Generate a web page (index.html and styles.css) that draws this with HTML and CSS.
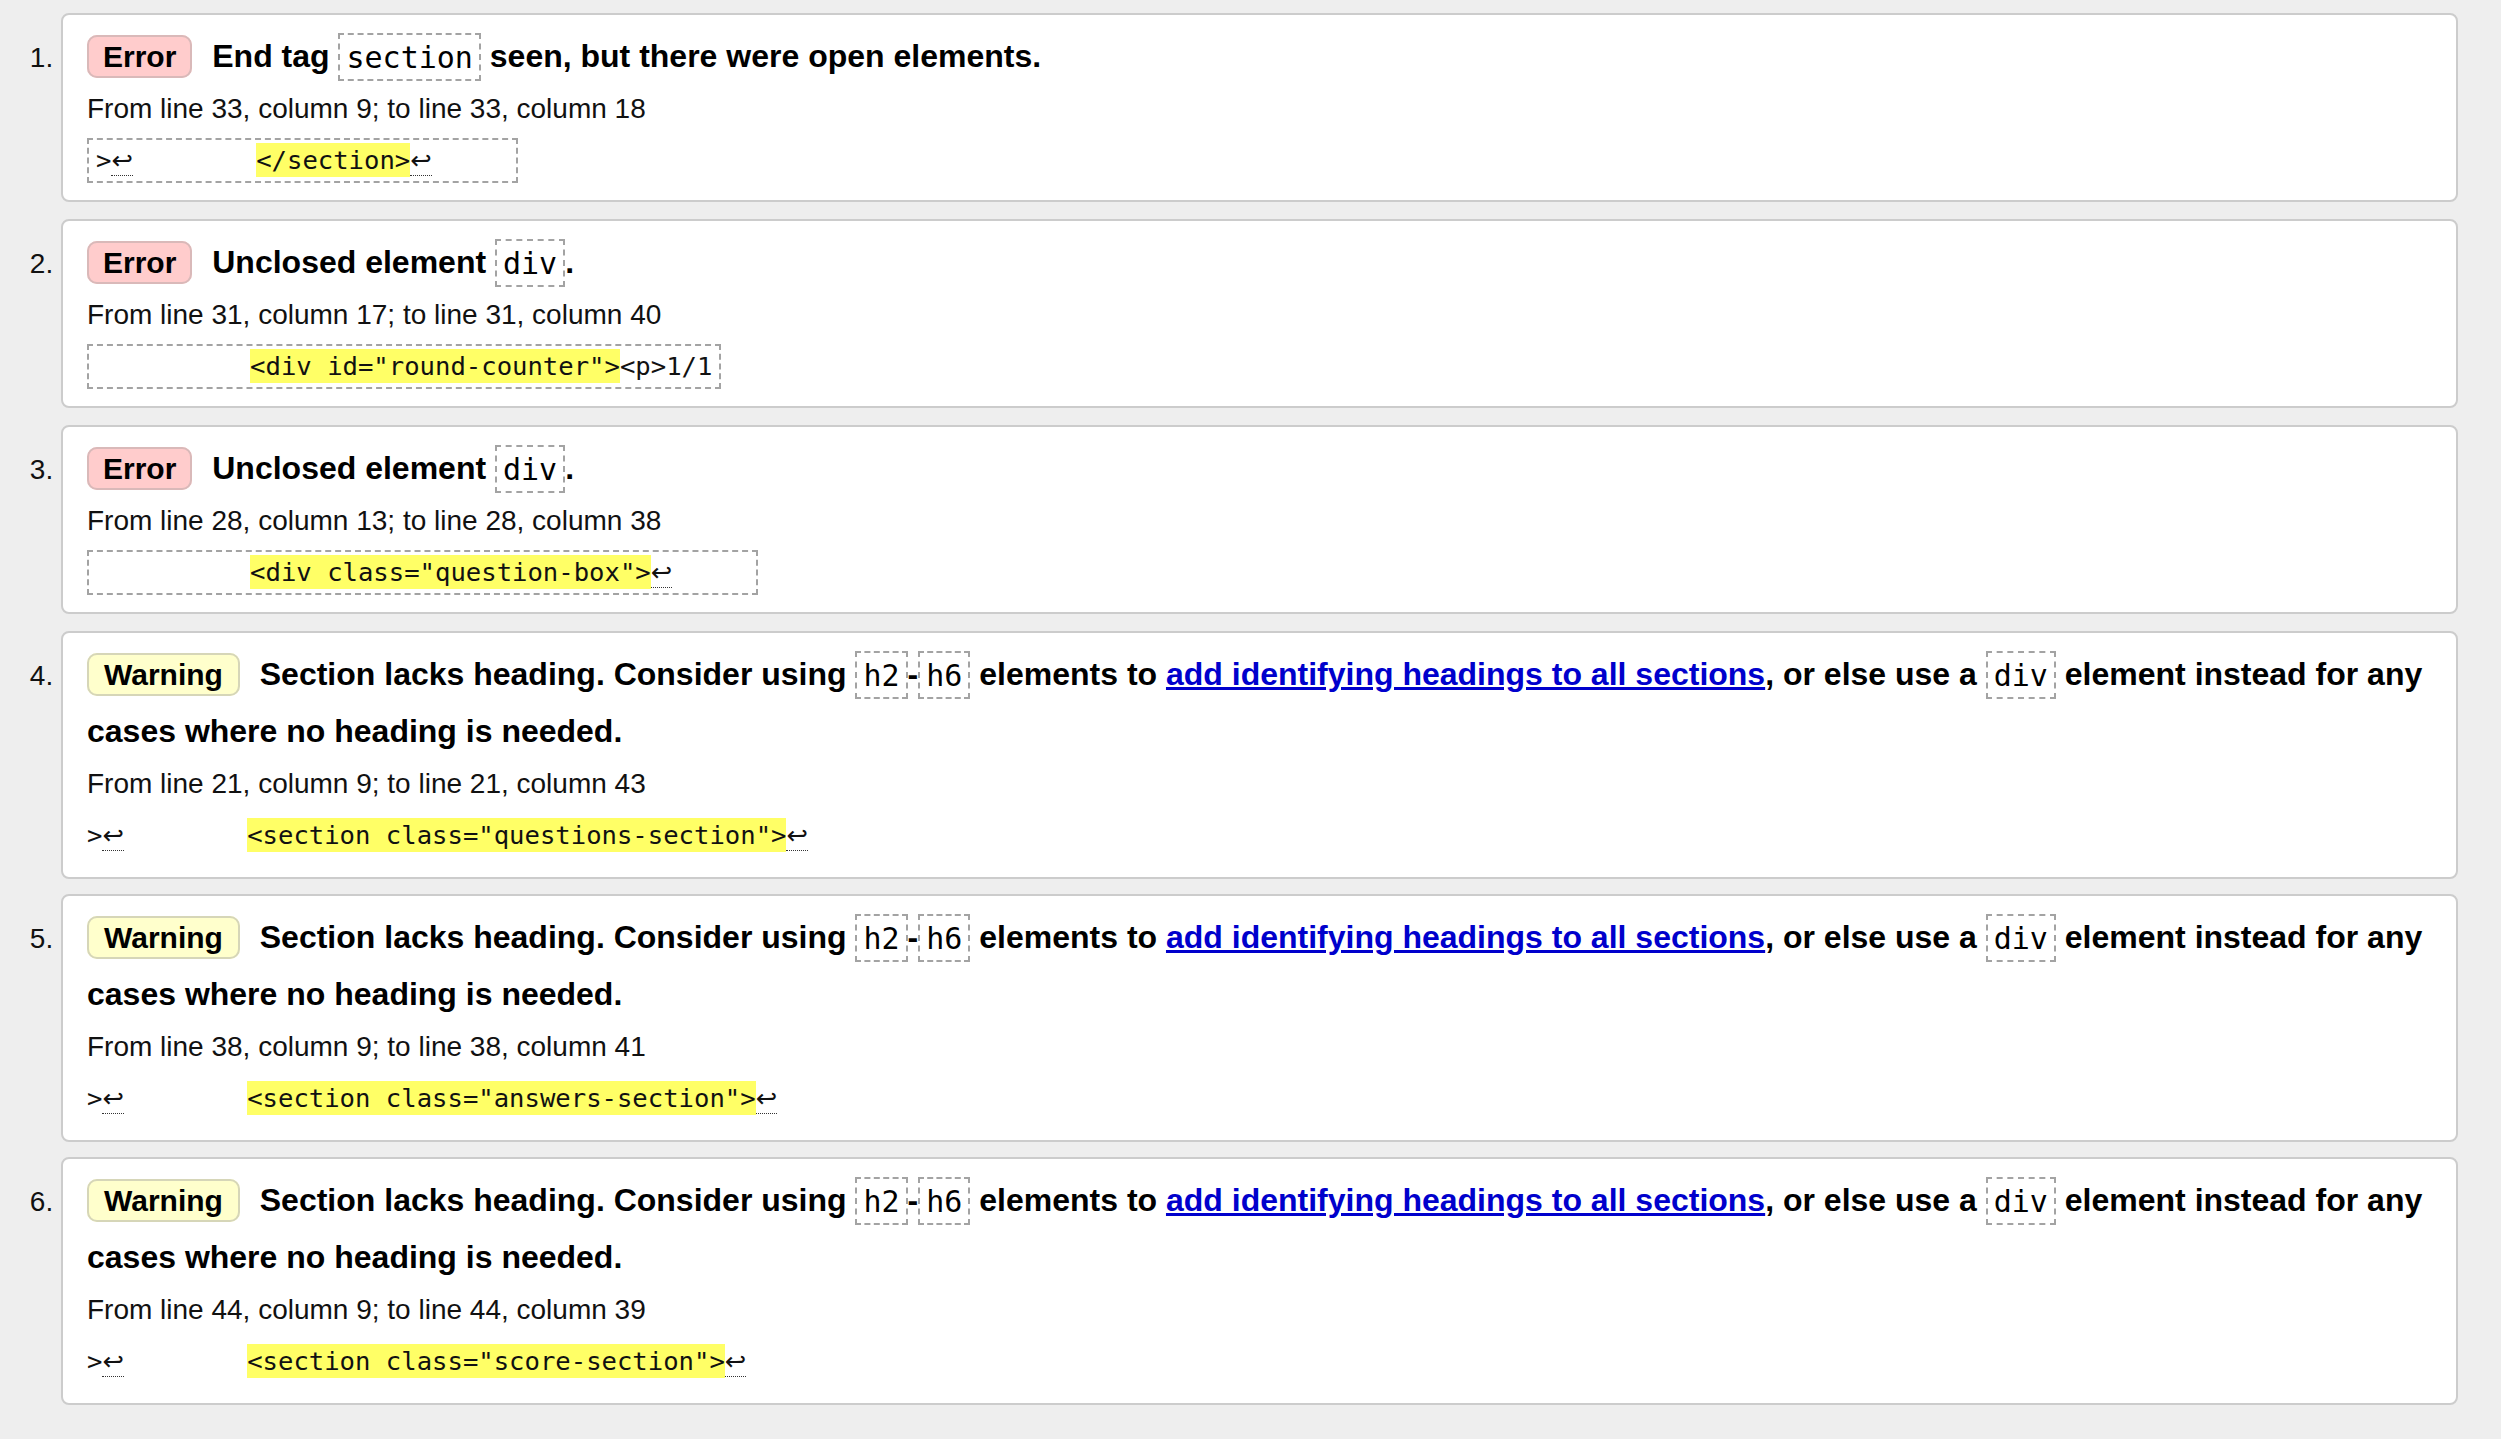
FILE: index.html
```html
<!DOCTYPE html>
<html lang="en">
<head>
<meta charset="utf-8">
<title>Validation messages</title>
<link rel="stylesheet" href="styles.css">
</head>
<body>
<ol class="messages">
  <li class="msg error">
    <p class="title"><strong class="badge">Error</strong> <span>End tag <code>section</code> seen, but there were open elements.</span></p>
    <p class="loc">From line 33, column 9; to line 33, column 18</p>
    <code class="extract">&gt;<span class="lf">↩</span>        <b>&lt;/section&gt;</b><span class="lf">↩</span>     </code>
  </li>
  <li class="msg error">
    <p class="title"><strong class="badge">Error</strong> <span>Unclosed element <code>div</code>.</span></p>
    <p class="loc">From line 31, column 17; to line 31, column 40</p>
    <code class="extract">          <b>&lt;div id="round-counter"&gt;</b>&lt;p&gt;1/1</code>
  </li>
  <li class="msg error">
    <p class="title"><strong class="badge">Error</strong> <span>Unclosed element <code>div</code>.</span></p>
    <p class="loc">From line 28, column 13; to line 28, column 38</p>
    <code class="extract">          <b>&lt;div class="question-box"&gt;</b><span class="lf">↩</span>     </code>
  </li>
  <li class="msg warning">
    <p class="title"><strong class="badge">Warning</strong> <span>Section lacks heading. Consider using <code>h2</code>-<code>h6</code> elements to <a href="#">add identifying headings to all sections</a>, or else use a <code>div</code> element instead for any cases where no heading is needed.</span></p>
    <p class="loc">From line 21, column 9; to line 21, column 43</p>
    <code class="extract plain">&gt;<span class="lf">↩</span>        <b>&lt;section class="questions-section"&gt;</b><span class="lf">↩</span></code>
  </li>
  <li class="msg warning">
    <p class="title"><strong class="badge">Warning</strong> <span>Section lacks heading. Consider using <code>h2</code>-<code>h6</code> elements to <a href="#">add identifying headings to all sections</a>, or else use a <code>div</code> element instead for any cases where no heading is needed.</span></p>
    <p class="loc">From line 38, column 9; to line 38, column 41</p>
    <code class="extract plain">&gt;<span class="lf">↩</span>        <b>&lt;section class="answers-section"&gt;</b><span class="lf">↩</span></code>
  </li>
  <li class="msg warning">
    <p class="title"><strong class="badge">Warning</strong> <span>Section lacks heading. Consider using <code>h2</code>-<code>h6</code> elements to <a href="#">add identifying headings to all sections</a>, or else use a <code>div</code> element instead for any cases where no heading is needed.</span></p>
    <p class="loc">From line 44, column 9; to line 44, column 39</p>
    <code class="extract plain">&gt;<span class="lf">↩</span>        <b>&lt;section class="score-section"&gt;</b><span class="lf">↩</span></code>
  </li>
</ol>
</body>
</html>
```
FILE: styles.css
```css
html, body {
  margin: 0;
  background: #eeeeee;
}

body {
  font-family: "Liberation Sans", Arial, sans-serif;
  color: #000;
}

.messages {
  list-style: decimal outside;
  margin: 0 43px 0 61px;
  padding: 13px 0 14px;
}

.msg {
  background: #fff;
  border: 2px solid #cccccc;
  border-radius: 8px;
  padding: 13px 10px 17px 24px;
  margin-bottom: 17px;
  font-size: 28px;
}

.msg.warning {
  padding-bottom: 19px;
  margin-bottom: 15px;
}

.msg::marker {
  font-size: 28px;
  color: #111;
}

.title {
  margin: 0;
  font-size: 32px;
  font-weight: bold;
  line-height: 57px;
}

.badge {
  display: inline;
  font-size: 30px;
  padding: 3px 14px;
  margin-right: 11px;
  border: 2px solid #d2b8b8;
  border-radius: 10px;
}

.error .badge {
  background: #ffcccc;
  border-color: #d9b9b9;
}

.warning .badge {
  background: #ffffcc;
  padding: 3px 15px;
  border-color: #d6d6b8;
}

.title code {
  font-family: "DejaVu Sans Mono", "Liberation Mono", monospace;
  font-weight: normal;
  font-size: 30px;
  padding: 4.5px 6px;
  border: 2px dashed #a3a3a3;
}

.title a {
  color: #0000cc;
  text-decoration: underline;
}

.loc {
  margin: 6px 0 0;
  font-size: 28px;
  line-height: 36px;
  color: #111;
}

.extract {
  display: block;
  width: fit-content;
  margin-top: 11px;
  padding: 3px 7px;
  border: 2px dashed #a3a3a3;
  font-family: "DejaVu Sans Mono", "Liberation Mono", monospace;
  font-size: 25.6px;
  line-height: 35px;
  white-space: pre;
  color: #111;
}

.extract.plain {
  border-color: transparent;
  border-left: 0;
  border-right: 0;
  padding-left: 0;
  padding-right: 0;
}

.extract b {
  font-weight: normal;
  background: #ffff66;
  padding: 2px 0;
}

.lf {
  font-family: "DejaVu Sans", sans-serif;
  border-bottom: 1px dotted #333;
}
```
